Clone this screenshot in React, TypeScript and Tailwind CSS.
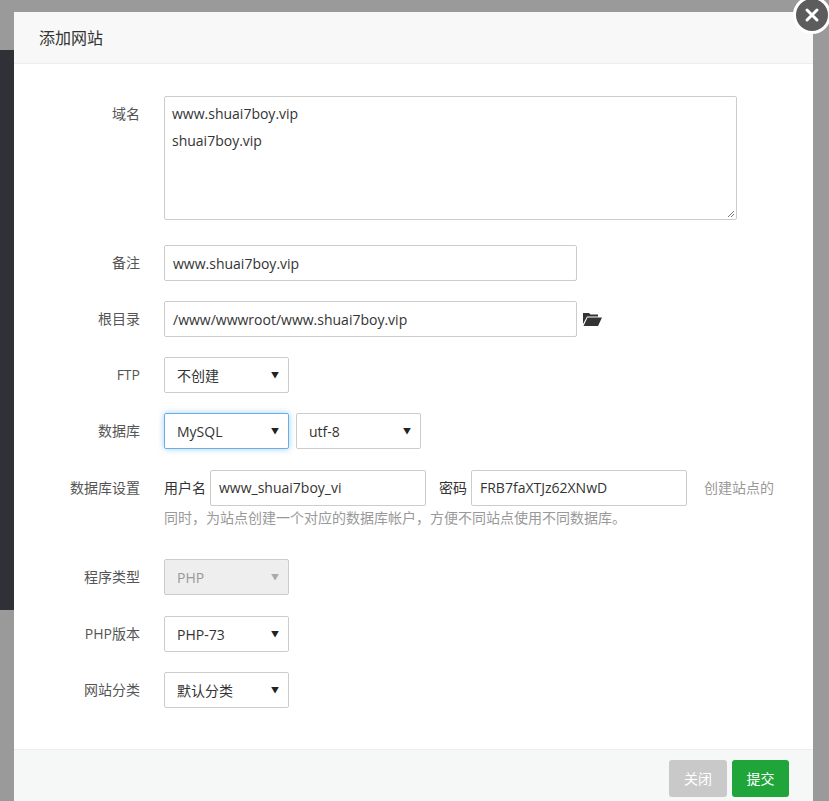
const font = { fontFamily: '"Open Sans", "Noto Sans CJK SC", sans-serif' };

function Label({ children }: { children: React.ReactNode }) {
  return <div className="w-[150px] shrink-0 pr-[24px] text-right text-[14px] text-[#555] leading-[36px]">{children}</div>;
}

function Select({ value, w = 125, focus = false, disabled = false }: { value: string; w?: number; focus?: boolean; disabled?: boolean }) {
  return (
    <div
      className={
        "h-[36px] rounded-[2px] border flex items-center justify-between pl-[12px] pr-[9px] text-[14px] " +
        (focus ? "border-[#66afe9] shadow-[0_0_6px_rgba(102,175,233,0.6)] text-[#333] " : "border-[#ccc] ") +
        (disabled ? "bg-[#eee] text-[#999]" : "bg-white text-[#333]")
      }
      style={{ width: w }}
    >
      <span>{value}</span>
      <span className={"text-[8px] " + (disabled ? "text-[#aaa]" : "text-[#222]")}>▼</span>
    </div>
  );
}

function Input({ value, w }: { value: string; w: number }) {
  return (
    <div className="h-[36px] rounded-[2px] border border-[#ccc] bg-white flex items-center px-[8px] text-[14px] text-[#333]" style={{ width: w }}>
      {value}
    </div>
  );
}

export default function App() {
  return (
    <div className="relative w-[829px] h-[801px] overflow-hidden bg-[#9a9a9a]" style={font}>
      <div className="absolute left-0 top-[50px] w-[14px] h-[560px] bg-[#2e3236]" />
      <div className="absolute left-[14px] top-[12px] w-[799px] h-[801px] bg-white flex flex-col">
        <div className="h-[52px] shrink-0 bg-[#f8f8f8] border-b border-[#eee] flex items-center pl-[25px] text-[16px] text-[#333]">添加网站</div>
        <div className="flex-1 pt-[32px] flex flex-col">
          <div className="flex">
            <Label>域名</Label>
            <div className="relative w-[573px] h-[124px] rounded-[2px] border border-[#ccc] px-[7px] pt-[3px] text-[14px] text-[#333] leading-[27px]">
              <div>www.shuai7boy.vip</div>
              <div>shuai7boy.vip</div>
              <svg className="absolute right-[1px] bottom-[1px]" width="9" height="9" viewBox="0 0 9 9"><path d="M8 2 2 8M8 5 5 8" stroke="#777" strokeWidth="1" /></svg>
            </div>
          </div>
          <div className="flex mt-[25px]">
            <Label>备注</Label>
            <Input value="www.shuai7boy.vip" w={413} />
          </div>
          <div className="flex mt-[20px] items-center">
            <Label>根目录</Label>
            <Input value="/www/wwwroot/www.shuai7boy.vip" w={413} />
            <svg className="ml-[6px]" width="19" height="14" viewBox="0 0 19 14"><path d="M0 1h6l1.5 1.5H15v2H4L0 12z" fill="#333" /><path d="M4.5 5.5H19L15 14H0.5z" fill="#333" /></svg>
          </div>
          <div className="flex mt-[20px]">
            <Label>FTP</Label>
            <Select value="不创建" />
          </div>
          <div className="flex mt-[20px] gap-[7px]">
            <Label>数据库</Label>
            <div className="-ml-[7px]"><Select value="MySQL" focus /></div>
            <Select value="utf-8" />
          </div>
          <div className="flex mt-[21px]">
            <Label>数据库设置</Label>
            <div className="w-[630px] text-[14px] leading-[36px]">
              <div className="flex items-center">
                <span className="text-[#333] pr-[4px]">用户名</span>
                <Input value="www_shuai7boy_vi" w={216} />
                <span className="text-[#333] ml-[13px] mr-[4px]">密码</span>
                <Input value="FRB7faXTJz62XNwD" w={216} />
                <span className="text-[#999] ml-[17px]">创建站点的</span>
              </div>
              <div className="text-[#999] leading-[24px]">同时，为站点创建一个对应的数据库帐户，方便不同站点使用不同数据库。</div>
            </div>
          </div>
          <div className="flex mt-[29px]">
            <Label>程序类型</Label>
            <Select value="PHP" disabled />
          </div>
          <div className="flex mt-[21px]">
            <Label>PHP版本</Label>
            <Select value="PHP-73" />
          </div>
          <div className="flex mt-[20px]">
            <Label>网站分类</Label>
            <Select value="默认分类" />
          </div>
        </div>
        <div className="h-[64px] shrink-0 bg-[#f6f8f8] border-t border-[#eee] flex items-start justify-end gap-[5px] pr-[24px] pt-[10px]">
          <button className="w-[58px] h-[37px] rounded-[3px] bg-[#c9c9c9] text-white text-[14px]">关闭</button>
          <button className="w-[57px] h-[37px] rounded-[3px] bg-[#20a53a] text-white text-[14px]">提交</button>
        </div>
      </div>
      <div className="absolute left-[793px] top-[-4px] w-[38px] h-[38px] rounded-full bg-[#5c5c5c] border-[3px] border-white flex items-center justify-center">
        <svg width="16" height="16" viewBox="0 0 16 16"><path d="M3 3l10 10M13 3 3 13" stroke="white" strokeWidth="3" strokeLinecap="round" /></svg>
      </div>
    </div>
  );
}
